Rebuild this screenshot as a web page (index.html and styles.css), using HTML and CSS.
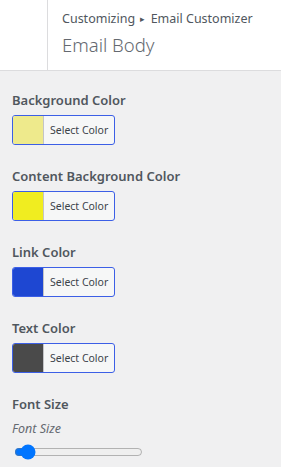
FILE: index.html
```html
<!DOCTYPE html>
<html>
<head>
  <title>Email Body</title>
  <link rel="stylesheet" href="styles.css">
</head>
<body>

  <div class="header">
    <div class="back"></div>
    <div class="title">
      <span class="crumb">Customizing <span class="sep">&#9656;</span> Email Customizer</span>
      <h2>Email Body</h2>
    </div>
  </div>

  <div class="controls">
    <div class="control">
      <span class="label">Background Color</span>
      <button class="color-btn"><span class="swatch" style="background: #eeea8c;"></span><span class="btn-text">Select Color</span></button>
    </div>

    <div class="control">
      <span class="label">Content Background Color</span>
      <button class="color-btn"><span class="swatch" style="background: #f0ed20;"></span><span class="btn-text">Select Color</span></button>
    </div>

    <div class="control">
      <span class="label">Link Color</span>
      <button class="color-btn"><span class="swatch" style="background: #1e47d2;"></span><span class="btn-text">Select Color</span></button>
    </div>

    <div class="control">
      <span class="label">Text Color</span>
      <button class="color-btn"><span class="swatch" style="background: #4a4a4a;"></span><span class="btn-text">Select Color</span></button>
    </div>

    <div class="control">
      <span class="label">Font Size</span>
      <span class="desc">Font Size</span>
      <input type="range" class="slider" min="0" max="100" value="5">
    </div>
  </div>

</body>
</html>
```

FILE: styles.css
```css
body {
  margin: 0;
  font-family: "Noto Sans", "Open Sans", sans-serif;
  background-color: #f0f0f1;
  color: #50575e;
}

.header {
  display: flex;
  height: 70px;
  background-color: #fff;
  border-bottom: 1px solid #dcdcde;
}

.back {
  width: 47px;
  border-right: 1px solid #dcdcde;
}

.title {
  padding: 10px 0 0 14px;
}

.crumb {
  display: block;
  font-size: 12.5px;
  line-height: 18px;
  color: #50575e;
}

.sep {
  font-size: 9px;
  margin: 0 2px;
  vertical-align: 1px;
}

.title h2 {
  margin: 4px 0 0;
  font-size: 18.5px;
  font-weight: 300;
  line-height: 26px;
  color: #646970;
}

.controls {
  padding: 19px 12px 0;
}

.control {
  display: flex;
  flex-direction: column;
  align-items: flex-start;
  margin-bottom: 21px;
}

.label {
  font-size: 13px;
  font-weight: 600;
  line-height: 20px;
  color: #50575e;
}

.color-btn {
  display: flex;
  align-items: stretch;
  margin-top: 5px;
  width: 103px;
  height: 30px;
  padding: 0;
  border: 1px solid #3c5fe6;
  border-radius: 3px;
  background-color: #f6f7f7;
  overflow: hidden;
  cursor: pointer;
}

.swatch {
  width: 30px;
  border-right: 1px solid #c3c4c7;
}

.btn-text {
  align-self: center;
  padding-left: 6px;
  font-family: "Noto Sans", "Open Sans", sans-serif;
  font-size: 10.5px;
  color: #3c434a;
}

.desc {
  margin-top: 6px;
  font-size: 12.5px;
  font-style: italic;
  line-height: 18px;
  color: #646970;
}

.slider {
  margin: 6px 2px 0;
  width: 129px;
}
```
